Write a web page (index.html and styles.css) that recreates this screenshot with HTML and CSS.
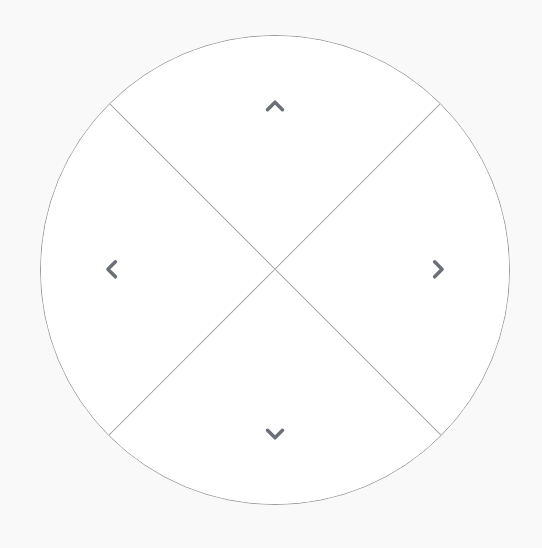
FILE: index.html
```html
<!DOCTYPE html>
<html lang="en">
<head>
    <meta charset="UTF-8">
    <meta name="viewport" content="width=device-width, initial-scale=1.0">
    <title>D-Pad</title>
    <link rel="stylesheet" href="styles.css">
</head>
<body>

    <div class="pad">
        <div class="pad-grid">
            <button class="pad-btn" aria-label="Up">
                <svg class="icon" viewBox="0 0 24 24"><path d="M4.5 15.75l7.5-7.5 7.5 7.5"/></svg>
            </button>
            <button class="pad-btn" aria-label="Right">
                <svg class="icon icon-right" viewBox="0 0 24 24"><path d="M4.5 15.75l7.5-7.5 7.5 7.5"/></svg>
            </button>
            <button class="pad-btn" aria-label="Left">
                <svg class="icon icon-left" viewBox="0 0 24 24"><path d="M4.5 15.75l7.5-7.5 7.5 7.5"/></svg>
            </button>
            <button class="pad-btn" aria-label="Down">
                <svg class="icon icon-down" viewBox="0 0 24 24"><path d="M4.5 15.75l7.5-7.5 7.5 7.5"/></svg>
            </button>
        </div>
    </div>

</body>
</html>
```

FILE: styles.css
```css
/* page */
body {
    margin: 0;
    height: 100vh;
    display: flex;
    align-items: center;
    justify-content: center;
    background: #f9f9f9;
    font-family: "Liberation Sans", Arial, sans-serif;
}

/* round pad */
.pad {
    width: 468px;
    height: 468px;
    margin: 0 0 8px 8px;
    border-radius: 50%;
    border: 1px solid #999999;
    background: #ffffff;
    overflow: hidden;
}

/* 2x2 grid turned 45deg so the gaps become diagonals */
.pad-grid {
    width: 100%;
    height: 100%;
    display: grid;
    grid-template-columns: 1fr 1fr;
    grid-template-rows: 1fr 1fr;
    transform: rotate(45deg);
}

.pad-btn {
    display: flex;
    align-items: center;
    justify-content: center;
    padding: 0;
    border: none;
    background: #ffffff;
    cursor: pointer;
}

/* inner edges draw the cross, outer padding pulls the chevron toward the middle */
.pad-btn:nth-child(1) { border-right: 1px solid #999999; border-bottom: 1px solid #999999; padding: 3px 0 0 3px; }
.pad-btn:nth-child(2) { border-bottom: 1px solid #999999; padding: 3.5px 3.5px 0 0; }
.pad-btn:nth-child(3) { border-right: 1px solid #999999; padding: 0 0 3.5px 3.5px; }
.pad-btn:nth-child(4) { padding: 0 2px 2px 0; }

.pad-btn:hover {
    background: #f3f4f6;
}

/* chevrons, undo the grid turn */
.icon {
    width: 24px;
    height: 24px;
    fill: none;
    stroke: #6b6f78;
    stroke-width: 3.5;
    stroke-linecap: round;
    stroke-linejoin: round;
    transform: rotate(-45deg);
}

.icon-right { transform: rotate(45deg); }
.icon-left { transform: rotate(-135deg); }
.icon-down { transform: rotate(135deg); }
```
